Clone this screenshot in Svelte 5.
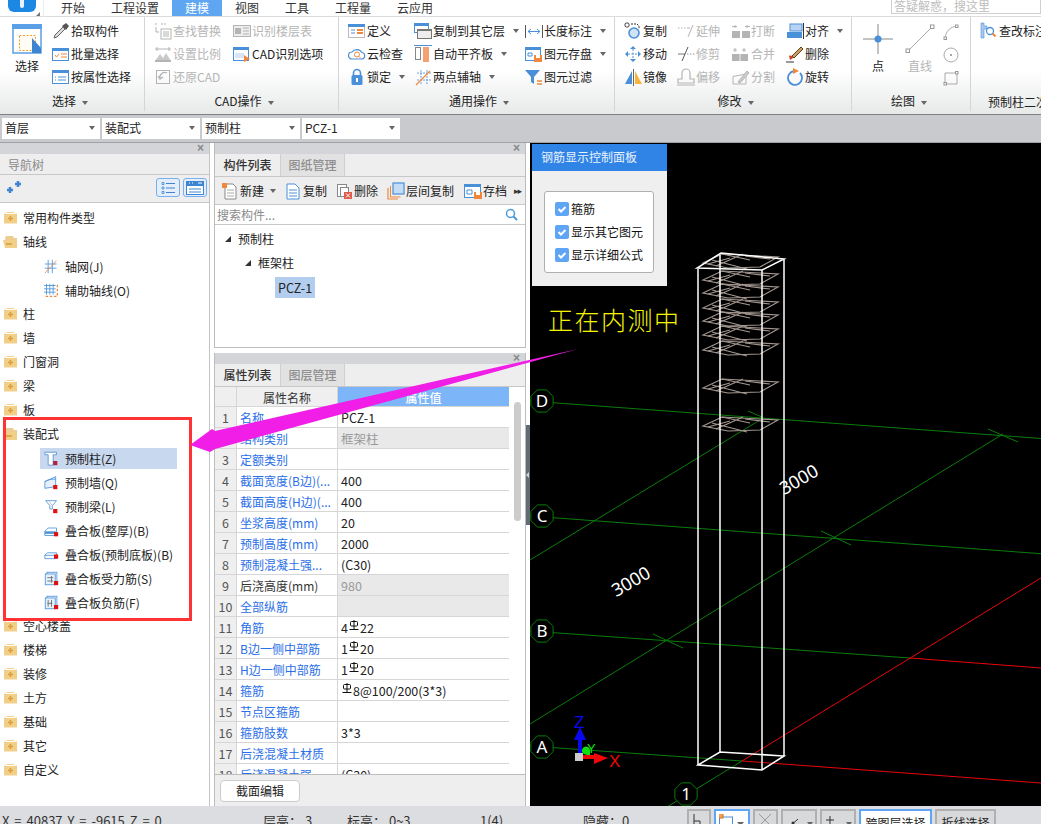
<script>
  const B = "#4a90d9";
  const O = "#f0873c";
  const G = "#b4b4b4";

  const icons = {
    pick: `<path d="M2 16l1-3 8-8 2 2-8 8z" fill="#ddd" stroke="#666"/><path d="M10 4l4-3 3 3-3 4z" fill="#555"/>`,
    batch: `<rect x=".5" y="3.5" width="16" height="12" fill="#fff" stroke="${B}"/><rect x="0" y="3" width="17" height="3" fill="${B}"/><path d="M3 10l1.5 2 2.5-3" fill="none" stroke="${O}"/><path d="M9 9h6M9 12h6" stroke="${O}"/>`,
    attr: `<rect x=".5" y="2.5" width="16" height="13" fill="#fff" stroke="${B}"/><rect x="0" y="2" width="17" height="3" fill="${B}"/><path d="M3 9h1M3 12h1M6 9h8M6 12h8" stroke="${B}"/>`,
    find: `<path d="M1 2h3M7 2h6" stroke="${G}" stroke-dasharray="2 1"/><rect x="7" y="7" width="10" height="10" fill="none" stroke="${G}"/><path d="M9 10h6M9 12h6M9 14h6" stroke="${G}"/><path d="M2 5v5h3" fill="none" stroke="${G}"/>`,
    floor: `<rect x=".5" y="3.5" width="17" height="11" fill="#eee" stroke="${G}"/><rect x="2" y="6" width="6" height="6" fill="${G}"/><path d="M10 6h6M10 9h6M10 12h6" stroke="${G}"/>`,
    scale: `<path d="M1 16l5-7 3 4 3-5 5 8z" fill="#c9c9c9"/><path d="M1 4h16M3 2v4M15 2v4" stroke="${G}"/><rect x="1" y="15" width="16" height="2" fill="${G}"/>`,
    undo: `<rect x="2.5" y="2.5" width="13" height="13" fill="none" stroke="${G}"/><path d="M13 5a5 5 0 0 0-7 6M4 8l2 3 3-2" fill="none" stroke="${G}" stroke-width="1.3"/>`,
    cadopt: `<rect x=".5" y="2.5" width="15" height="13" fill="#fff" stroke="${B}"/><rect x="0" y="2" width="16" height="3" fill="${B}"/><path d="M2 8h9v5H2z" fill="#d6e6f7"/><path d="M11 10l6 4-6 3z" fill="${O}"/>`,
    def: `<rect x=".5" y="2.5" width="16" height="13" fill="#fff" stroke="#bbb"/><rect x="0" y="2" width="17" height="3" fill="${B}"/><path d="M3 8h4M3 11h4" stroke="${B}"/><rect x="9" y="7" width="6" height="2" fill="${O}"/><rect x="9" y="10" width="6" height="2" fill="${O}"/>`,
    cloud: `<path d="M4 14a3.5 3.5 0 0 1 0-7 6 6 0 0 1 10 .5 3.3 3.3 0 0 1 0 6.5z" fill="#fff" stroke="${B}" stroke-width="1.2"/><circle cx="9" cy="9.5" r="2.5" fill="none" stroke="${O}"/><path d="M11 11.5l1.5 1.5" stroke="${O}"/>`,
    lock: `<rect x="3.5" y="7" width="11" height="10" rx="1.5" fill="${B}"/><path d="M5.5 7V5a3.5 3.5 0 0 1 7 0v2" fill="none" stroke="${B}" stroke-width="1.6"/><rect x="8" y="10" width="2" height="4" fill="#fff"/>`,
    copyfl: `<rect x=".5" y="1.5" width="14" height="9" fill="#fff" stroke="${B}"/><rect x="0" y="1" width="15" height="3" fill="${B}"/><rect x="3.5" y="7.5" width="14" height="9" fill="#eee" stroke="#777"/><rect x="3" y="7" width="15" height="2" fill="#777"/>`,
    align: `<path d="M0 .5h18" stroke="${B}"/><rect x="1.5" y="2.5" width="5" height="12" fill="#fff" stroke="#888"/><rect x="9" y="2" width="6" height="15" fill="#f4a070"/>`,
    twopt: `<path d="M3 5h14M3 12h14M7 2v15M13 2v15" stroke="${B}" stroke-width=".8" stroke-dasharray="2 1"/><path d="M2 17L16 3" stroke="${O}" stroke-width="1.2"/>`,
    dim: `<path d="M.5 3v13M17.5 3v13" stroke="#555"/><path d="M3 9.5h12M3 9.5l3-2.5M3 9.5l3 2.5M15 9.5l-3-2.5M15 9.5l-3 2.5" fill="none" stroke="${B}"/>`,
    store: `<rect x=".5" y="2.5" width="15" height="13" fill="#fff" stroke="${B}"/><rect x="0" y="2" width="16" height="3" fill="${B}"/><path d="M3 8h4v3H3z" fill="none" stroke="${B}"/><rect x="9" y="10" width="8" height="7" fill="${O}"/><rect x="11" y="10" width="4" height="3" fill="#fff"/>`,
    filter: `<path d="M0 2h15L9 9v7l-3-2V9z" fill="${B}"/><path d="M12 13h5M12 16h5" stroke="${O}" stroke-width="1.4"/>`,
    copy: `<rect x="1" y="1" width="4" height="4" rx="1.5" fill="#fff" stroke="#333"/><path d="M7 2h6l2 2v3" fill="none" stroke="#333" stroke-dasharray="2 1"/><circle cx="10" cy="11" r="5" fill="#cfe3f7" stroke="${B}" stroke-width="1.6"/>`,
    extend: `<path d="M1 6h1.5M4 6h1.5M7 6h1.5" stroke="${G}"/><path d="M11 15l5-12" stroke="${G}"/><path d="M10 6h3" stroke="${G}"/>`,
    cut: `<path d="M1 9h7" stroke="#777"/><path d="M10 9h1.5M13 9h1.5M16 9h1.5" stroke="#999"/><path d="M5 16L11 2" stroke="#555"/>`,
    brk: `<rect x="0" y="9" width="8" height="7" fill="${G}"/><rect x="10" y="9" width="8" height="7" fill="${G}"/><path d="M3 3v3M0 4.500h5M15 3v3M13 4.500h5" stroke="${G}"/>`,
    merge: `<rect x="0" y="9" width="16" height="7" fill="${G}"/><path d="M8 9v7" stroke="#eee"/><path d="M3 3v4M1 5h4M12 3v4M10 5h4" stroke="${G}"/>`,
    offset: `<path d="M1 15v-4h4V5a3 3 0 0 1 8 0v6h4v4z" fill="none" stroke="${G}" stroke-width="1.2"/><path d="M0 17h18" stroke="${G}"/>`,
    split: `<path d="M1 8.500L14 6v10H1z" fill="none" stroke="${G}"/><path d="M6 14L15 3l2 2-9 10z" fill="#ccc" stroke="${G}"/>`,
    mirror: `<path d="M8 3L1 16h7z" fill="${B}"/><path d="M11 3l7 13h-7z" fill="#f5b43c"/><path d="M9.500 1v17" stroke="#666"/>`,
    move: `<path d="M9 1l3 3H6zM9 17l3-3H6zM1 9l3-3v6zM17 9l-3-3v6z" fill="${B}"/><path d="M9 4v10M4 9h10" stroke="${B}" stroke-dasharray="2 1.500"/>`,
    alignr: `<rect x="4" y="2" width="12" height="7" fill="#b9d4f2" stroke="${B}"/><rect x="1" y="10" width="15" height="6" fill="${B}"/><path d="M17.500 1v16" stroke="#333"/>`,
    del: `<path d="M6 11L15 2l2 2-9 9z" fill="#c8a060" stroke="#66401e"/><path d="M3 11c2-1 4 0 4 2l-3 2z" fill="#cc4422"/><path d="M0 17h8" stroke="#333"/>`,
    rotate: `<path d="M8 3a7 7 0 1 0 6 2" fill="none" stroke="${B}" stroke-width="1.8"/><path d="M7 0l6 3-6 3z" fill="${O}"/>`,
    query: `<path d="M1 1h3v3h3v3H4v9H1z" fill="#a8c8ee" stroke="${B}" stroke-width=".6"/><circle cx="10" cy="9" r="3.500" fill="#fff" stroke="${B}" stroke-width="1.3"/><path d="M12.500 11.500l3 3" stroke="${O}" stroke-width="2"/>`,
    fnew: `<path d="M4 2h8l3 3v12H4z" fill="#fff" stroke="#888"/><path d="M6 8h7M6 11h7M6 14h7" stroke="#aaa"/><rect x="1" y="1" width="5" height="5" fill="${O}" stroke-dasharray="1 1"/>`,
    fcopy: `<path d="M3 2h8l4 4v11H3z" fill="#fff" stroke="${B}"/><path d="M5 8h8M5 11h8M5 14h8" stroke="${B}"/>`,
    fdel: `<rect x="2.500" y="2.500" width="9" height="12" fill="#fff" stroke="#888"/><rect x="5.500" y="5.500" width="8" height="9" fill="#fff" stroke="#888"/><rect x="9" y="10" width="8" height="7" fill="#e05a4a"/><path d="M11 11.500l4 4M15 11.500l-4 4" stroke="#fff"/>`,
    fcross: `<path d="M1 6v11h10" fill="none" stroke="${O}" stroke-width="1.200"/><path d="M3.500 4v11h10" fill="none" stroke="${O}"/><rect x="6" y="1" width="11" height="11" fill="#c5dcf5" stroke="${B}" stroke-width="1.200"/>`,
    fsave: `<rect x=".5" y="2.500" width="16" height="13" fill="#fff" stroke="${B}"/><rect x="0" y="2" width="17" height="3" fill="${B}"/><path d="M3 8h5v4H3z" fill="none" stroke="${B}"/><rect x="10" y="10" width="8" height="7" fill="${O}"/><rect x="12" y="10" width="4" height="3" fill="#fff"/>`,
    net: `<path d="M5 1v16M10 1v16M1 6h14M1 11h14" stroke="${B}"/><path d="M1 17L15 2" stroke="${O}"/>`,
    aux: `<path d="M3 1v13M7 1v13M11 1v13M0 3h14M0 7h14M0 11h14" stroke="${B}"/><path d="M16 2v3M16 7v3M16 12v3M2 16h3M7 16h3M12 16h3" stroke="${O}" stroke-width="1.500"/>`,
    pcol: `<path d="M1 1.500h14v3h-4V17H5V4.500H1z" fill="#fff" stroke="${B}"/><rect x="11" y="12" width="5" height="5" fill="#b02040"/>`,
    pwall: `<path d="M1 8l13-6v12L1 16z" fill="#e6f0fb" stroke="${B}"/><path d="M1 8c4-3 9-3 13-3" fill="none" stroke="${B}"/><rect x="11" y="12" width="5" height="5" fill="#e01010"/>`,
    pbeam: `<path d="M2 2h13l-5 6v4H7V8z" fill="#fff" stroke="${B}"/><path d="M6 3l4 5" stroke="${G}"/><rect x="11" y="12" width="5" height="5" fill="#e01010"/>`,
    slab: `<path d="M1 10l4-4h10v9H1z" fill="#fff" stroke="${B}"/><rect x="1" y="10" width="14" height="3" fill="${B}"/><rect x="12" y="11" width="5" height="5" fill="#e01010"/>`,
    slab2: `<path d="M1 10l3-3h11v7H1z" fill="#fff" stroke="${B}"/><path d="M1 10h14" stroke="${B}"/><rect x="12" y="9" width="5" height="5" fill="#e01010"/>`,
    slabs: `<rect x="3.500" y="1.500" width="12" height="13" fill="#fff" stroke="${B}"/><rect x="1.500" y="3.500" width="12" height="13" fill="#e6f0fb" stroke="${B}"/><path d="M4 8h7M4 12h7M9 6v8" stroke="#666"/><rect x="12" y="12" width="5" height="5" fill="#e01010"/>`,
    slabf: `<rect x="3.500" y="1.500" width="12" height="13" fill="#fff" stroke="${B}"/><rect x="1.500" y="3.500" width="12" height="13" fill="#e6f0fb" stroke="${B}"/><path d="M5 6v8M9 6v8M4 10h6" stroke="#666"/><rect x="12" y="12" width="5" height="5" fill="#e01010"/>`,
  };

  const groups = [
    {
      label: "CAD操作", width: 194, pad: 9,
      cols: [
        { w: 79, items: [{ icon: "find", text: "查找替换", off: 1 }, { icon: "scale", text: "设置比例", off: 1 }, { icon: "undo", text: "还原CAD", off: 1 }] },
        { w: 100, items: [{ icon: "floor", text: "识别楼层表", off: 1 }, { icon: "cadopt", text: "CAD识别选项" }] },
      ],
    },
    {
      label: "通用操作", width: 276, pad: 9,
      cols: [
        { w: 66, items: [{ icon: "def", text: "定义" }, { icon: "cloud", text: "云检查" }, { icon: "lock", text: "锁定", arrow: 1 }] },
        { w: 111, items: [{ icon: "copyfl", text: "复制到其它层", arrow: 1 }, { icon: "align", text: "自动平齐板", arrow: 1 }, { icon: "twopt", text: "两点辅轴", arrow: 1 }] },
        { w: 85, items: [{ icon: "dim", text: "长度标注", arrow: 1 }, { icon: "store", text: "图元存盘", arrow: 1 }, { icon: "filter", text: "图元过滤" }] },
      ],
    },
    {
      label: "修改", width: 237, pad: 9,
      cols: [
        { w: 53, items: [{ icon: "copy", text: "复制" }, { icon: "move", text: "移动" }, { icon: "mirror", text: "镜像" }] },
        { w: 55, items: [{ icon: "extend", text: "延伸", off: 1 }, { icon: "cut", text: "修剪", off: 1 }, { icon: "offset", text: "偏移", off: 1 }] },
        { w: 54, items: [{ icon: "brk", text: "打断", off: 1 }, { icon: "merge", text: "合并", off: 1 }, { icon: "split", text: "分割", off: 1 }] },
        { w: 60, items: [{ icon: "alignr", text: "对齐", arrow: 1 }, { icon: "del", text: "删除" }, { icon: "rotate", text: "旋转" }] },
      ],
    },
  ];

  const tree = [
    { text: "常用构件类型", icon: "plus" }, { text: "轴线", icon: "minus" },
    { text: "轴网(J)", child: "net" }, { text: "辅助轴线(O)", child: "aux" },
    { text: "柱", icon: "plus" }, { text: "墙", icon: "plus" }, { text: "门窗洞", icon: "plus" },
    { text: "梁", icon: "plus" }, { text: "板", icon: "plus" }, { text: "装配式", icon: "minus" },
    { text: "预制柱(Z)", child: "pcol", sel: 1 }, { text: "预制墙(Q)", child: "pwall" }, { text: "预制梁(L)", child: "pbeam" },
    { text: "叠合板(整厚)(B)", child: "slab" }, { text: "叠合板(预制底板)(B)", child: "slab2" },
    { text: "叠合板受力筋(S)", child: "slabs" }, { text: "叠合板负筋(F)", child: "slabf" },
    { text: "空心楼盖", icon: "plus" }, { text: "楼梯", icon: "plus" }, { text: "装修", icon: "plus" },
    { text: "土方", icon: "plus" }, { text: "基础", icon: "plus" }, { text: "其它", icon: "plus" }, { text: "自定义", icon: "plus" },
  ];

  const listTools = [
    { icon: "fnew", text: "新建", arrow: 1, w: 63 }, { icon: "fcopy", text: "复制", w: 51 }, { icon: "fdel", text: "删除", w: 52 },
    { icon: "fcross", text: "层间复制", w: 77 }, { icon: "fsave", text: "存档", w: 50 },
  ];

  // # marks the rebar grade symbol
  const props = [
    ["名称", "PCZ-1"], ["结构类别", "框架柱", "gray"], ["定额类别", ""],
    ["截面宽度(B边)(...", "400"], ["截面高度(H边)(...", "400"], ["坐浆高度(mm)", "20"],
    ["预制高度(mm)", "2000"], ["预制混凝土强...", "(C30)"], ["后浇高度(mm)", "980", "gray", "plain"],
    ["全部纵筋", "", "gray"], ["角筋", "4#22"], ["B边一侧中部筋", "1#20"], ["H边一侧中部筋", "1#20"],
    ["箍筋", " #8@100/200(3*3)"], ["节点区箍筋", ""], ["箍筋肢数", "3*3"], ["后浇混凝土材质", ""], ["后浇混凝土强", "(C30)"],
  ];

  const checks = ["箍筋", "显示其它图元", "显示详细公式"];
  const stirrups = [260, 277, 290, 305, 318, 332, 347, 385, 423];
  const axes = [
    { t: "D", x: 542, y: 400 }, { t: "C", x: 542, y: 515 }, { t: "B", x: 542, y: 630 },
    { t: "A", x: 542, y: 746 }, { t: "1", x: 686, y: 793 },
  ];
  const ticks = [[988, 428, 1018, 441], [821, 530, 851, 544], [653, 633, 683, 647], [748, 410, 762, 416]];
  const tools = ["首层", "装配式", "预制柱", "PCZ-1"];

  function octagon(x, y) {
    const r = 12;
    let pts = [];
    for (let i = 0; i < 8; i++) {
      const a = Math.PI / 8 + (i * Math.PI) / 4;
      pts.push(`${(x + r * Math.cos(a)).toFixed(1)},${(y + r * Math.sin(a)).toFixed(1)}`);
    }
    return pts.join(" ");
  }
</script>

{#snippet icon(name, size = 18)}
  <svg class="ico" width={size} height={size} viewBox="0 0 18 18">{@html icons[name]}</svg>
{/snippet}

{#snippet close()}
  <div class="titlebar"><span class="x">×</span></div>
{/snippet}

<div class="app">
  <header class="tabs">
    <div class="logo">
      <div class="logo-mark"><i></i></div>
      <span class="logo-arrow"></span>
    </div>
    <nav class="tab-list">
      <span>开始</span><span>工程设置</span><span class="on">建模</span><span>视图</span><span>工具</span><span>工程量</span><span>云应用</span>
    </nav>
    <div class="ask">答疑解惑，搜这里</div>
  </header>

  <section class="ribbon">
    <div class="group" style="width:145px">
      <div class="group-body">
        <div class="big big-select">
          <svg width="30" height="30" viewBox="0 0 30 30">
            <rect x="1" y="1" width="28" height="28" fill="#fff" stroke="#5b9fe6" stroke-width="1.500" />
            <rect x="0" y="0" width="30" height="5" fill="#5b9fe6" />
            <rect x="7.500" y="11.500" width="16" height="15" fill="#fffdf4" stroke="#f0a030" stroke-dasharray="2 1.500" />
            <path d="M20 14l9 10v5h-9z" fill="#3d85d0" />
          </svg>
          <span>选择</span>
        </div>
        <div class="col">
          <div class="item">{@render icon("pick")}<span>拾取构件</span></div>
          <div class="item">{@render icon("batch")}<span>批量选择</span></div>
          <div class="item">{@render icon("attr")}<span>按属性选择</span></div>
        </div>
      </div>
      <div class="group-label">选择<i class="caret"></i></div>
    </div>

    {#each groups as g}
      <div class="group" style="width:{g.width}px;padding-left:{g.pad}px">
        <div class="group-body">
          {#each g.cols as c}
            <div class="col" style="width:{c.w}px">
              {#each c.items as it}
                <div class="item" class:off={it.off}>
                  {@render icon(it.icon)}<span>{it.text}</span>{#if it.arrow}<i class="caret"></i>{/if}
                </div>
              {/each}
            </div>
          {/each}
        </div>
        <div class="group-label">{g.label}<i class="caret"></i></div>
      </div>
    {/each}

    <div class="group" style="width:119px">
      <div class="group-body">
        <div class="big" style="width:52px">
          <svg width="30" height="30" viewBox="0 0 30 30">
            <path d="M0 15h30M15 0v30" stroke="#888" />
            <circle cx="15" cy="15" r="3.500" fill="#4a90d9" />
          </svg>
          <span>点</span>
        </div>
        <div class="big off" style="width:32px">
          <svg width="30" height="30" viewBox="0 0 30 30">
            <path d="M3 27L27 3" stroke="#aaa" />
            <rect x="1" y="25" width="3.500" height="3.500" fill="#fff" stroke="#999" />
            <rect x="25.500" y="1" width="3.500" height="3.500" fill="#fff" stroke="#999" />
          </svg>
          <span>直线</span>
        </div>
        <div class="col mini">
          <svg width="16" height="16" viewBox="0 0 16 16"><path d="M2 14C3 7 7 3 14 2" fill="none" stroke="#aaa" /><rect x="1" y="13" width="2.500" height="2.500" fill="#fff" stroke="#999" /><rect x="12.500" y="1" width="2.500" height="2.500" fill="#fff" stroke="#999" /></svg>
          <svg width="16" height="16" viewBox="0 0 16 16"><circle cx="8" cy="8" r="7" fill="none" stroke="#aaa" /><circle cx="8" cy="8" r="1" fill="#888" /></svg>
          <svg width="16" height="16" viewBox="0 0 16 16"><path d="M2 3h12v11H2z" fill="none" stroke="#aaa" /><rect x="12.500" y="1.500" width="2.500" height="2.500" fill="#fff" stroke="#999" /><rect x="1" y="12.500" width="2.500" height="2.500" fill="#fff" stroke="#999" /></svg>
        </div>
      </div>
      <div class="group-label">绘图<i class="caret"></i></div>
    </div>

    <div class="group last">
      <div class="group-body">
        <div class="col">
          <div class="item">{@render icon("query")}<span>查改标注</span></div>
        </div>
      </div>
      <div class="group-label">预制柱二次编辑</div>
    </div>
  </section>

  <section class="selects">
    {#each tools as t}
      <div class="select"><span>{t}</span><i class="caret"></i></div>
    {/each}
  </section>

  <main class="main">
    <aside class="nav">
      {@render close()}
      <div class="nav-title">导航树</div>
      <div class="nav-tools">
        <svg width="14" height="14" viewBox="0 0 14 14" class="spark">
          <path d="M8 4h6M11 1v6M0 10h6M3 7v6" stroke="#3d85d0" stroke-width="2.500" />
        </svg>
        <span class="nav-gap"></span>
        <button class="view-btn" aria-label="列表">
          <svg width="14" height="14" viewBox="0 0 14 14"><path d="M1 1.500h2v2H1zM1 6h2v2H1zM1 10.500h2v2H1z" fill="none" stroke="#3d85d0" stroke-width=".8" /><path d="M5 2.500h9M5 7h9M5 11.500h9" stroke="#3d85d0" /></svg>
        </button>
        <button class="view-btn" aria-label="面板">
          <svg width="18" height="14" viewBox="0 0 18 14"><rect x=".5" y=".5" width="17" height="13" fill="#fff" stroke="#3d85d0" /><rect x="0" y="0" width="18" height="5" fill="#3d85d0" /><path d="M3 8h12M3 11h12" stroke="#3d85d0" /><path d="M3 2h1M6 2h1M12 2h4" stroke="#fff" /></svg>
        </button>
      </div>
      <ul class="tree">
        {#each tree as n}
          {#if n.child}
            <li class="leaf" class:sel={n.sel}>{@render icon(n.child, 15)}<span>{n.text}</span></li>
          {:else}
            <li class="branch">
              <svg class="folder" width="15" height="14" viewBox="0 0 15 14">
                {#if n.icon === "plus"}
                  <path d="M3 2.500l1-1.500h7l.5 1.500h2.500v10H1v-10z" fill="#f1cf89" />
                  <path d="M3 2.500h9" stroke="#fff" />
                  <path d="M7.500 5v5M5 7.500h5" stroke="#d8a03c" stroke-width="1.600" />
                {:else}
                  <path d="M2 3l1-2h7l1 2h3v10H4z" fill="#eccd92" />
                  <path d="M0 5h13l1 8H2z" fill="#f1cf89" />
                  <path d="M3 9h6" stroke="#d8a03c" stroke-width="1.600" />
                {/if}
              </svg>
              <span>{n.text}</span>
            </li>
          {/if}
        {/each}
      </ul>
    </aside>

    <div class="gutter"></div>

    <div class="middle">
      <section class="panel list-panel">
        {@render close()}
        <div class="panel-tabs"><span class="active">构件列表</span><span>图纸管理</span></div>
        <div class="list-tools">
          {#each listTools as t}
            <div class="list-tool" style="width:{t.w}px">
              {@render icon(t.icon)}<span>{t.text}</span>{#if t.arrow}<i class="caret"></i>{/if}
            </div>
          {/each}
          <span class="more">▸▸</span>
        </div>
        <div class="search">
          <span>搜索构件...</span>
          <svg width="13" height="13" viewBox="0 0 13 13"><circle cx="5.500" cy="5.500" r="4" fill="none" stroke="#4a9bd8" stroke-width="1.500" /><path d="M8.500 8.500l3.500 3.500" stroke="#4a9bd8" stroke-width="2" /></svg>
        </div>
        <div class="list-tree">
          <div class="t1"><i class="tri"></i>预制柱</div>
          <div class="t2"><i class="tri"></i>框架柱</div>
          <div class="t3"><span>PCZ-1</span></div>
        </div>
      </section>

      <section class="panel prop-panel">
        {@render close()}
        <div class="panel-tabs"><span class="active">属性列表</span><span>图层管理</span></div>
        <div class="table-wrap">
          <div class="table">
            <div class="row head">
              <div class="num"></div><div class="name">属性名称</div><div class="val">属性值</div>
            </div>
            {#each props as p, i}
              <div class="row">
                <div class="num">{i + 1}</div>
                <div class="name" class:plain={p[3]}>{p[0]}</div>
                <div class="val" class:gray={p[2]}>
                  {#each p[1].split("#") as part, k}
                    {#if k > 0}
                      <svg class="rebar" width="10" height="11" viewBox="0 0 10 11"><rect x="1.500" y="1.500" width="7" height="4.500" rx="1" fill="none" stroke="#111" /><path d="M5 0v9.500M.5 9.500h9" stroke="#111" /></svg>
                    {/if}{part}
                  {/each}
                </div>
              </div>
            {/each}
          </div>
          <div class="scroll"><div class="thumb"></div></div>
        </div>
        <div class="prop-foot"><button class="edit-btn">截面编辑</button></div>
      </section>
    </div>

    <div class="splitter"><div class="grip"><i></i></div></div>

    <section class="view">
      <svg class="scene" viewBox="530 142 511 664" width="511" height="664">
        <g stroke="#0a7c0a" fill="none">
          <path d="M530 400L1041 437.500M530 515L1041 552.700M530 630L910 657" />
          <path d="M530 559L760 419M530 723L1003 433M667 806L742 760M530 745L742 760" />
          {#each ticks as t}
            <path d="M{t[0]} {t[1]}L{t[2]} {t[3]}" />
          {/each}
        </g>
        <path d="M910 657L1041 667M742 760L1041 782M742 760L1041 577" stroke="#e8060c" fill="none" />

        {#each stirrups as y}
          <g transform="translate(0 {y})" fill="none" stroke="#a2968f" stroke-width="1.200">
            <path d="M703 2L722 -7L778 -4L760 6L728 7Z" />
            <path d="M712 -1L747 8M743 -7L716 5M745 -5L770 -2M708 3L730 -3M722 -7L750 -1" />
          </g>
        {/each}

        <g fill="none" stroke="#fff" stroke-width="1.500">
          <path d="M697 267L762 269L784 258L721 252ZM698 267V764M762 269V769M784 258V755M720 252V751" />
          <path d="M698 764L762 769L784 755L720 751Z" />
        </g>

        {#each axes as a}
          <polygon points={octagon(a.x, a.y)} fill="#000" stroke="#0a7c0a" />
          <text x={a.x} y={a.y + 6} class="axis">{a.t}</text>
        {/each}

        <text class="dim-text" transform="translate(634 586) rotate(-30)">3000</text>
        <text class="dim-text" transform="translate(802 484) rotate(-30)">3000</text>
        <text class="beta" x="548" y="329">正在内测中</text>

        <path d="M580 756V738" stroke="#0808f0" stroke-width="4" />
        <path d="M580 726l6 13h-12z" fill="#0808f0" />
        <text class="gizmo" x="574" y="727" fill="#0808f0">Z</text>
        <path d="M590 750a4 4 0 1 0-6 3l6 2z" fill="#10e010" />
        <text class="gizmo small" x="587" y="752" fill="#10e010">Y</text>
        <path d="M582 756H596" stroke="#f00808" stroke-width="4" />
        <path d="M608 757l-14 6v-11z" fill="#f00808" />
        <text class="gizmo" x="609" y="766" fill="#f00808">X</text>
        <rect x="575" y="752" width="8" height="8" fill="#ccc" />
      </svg>

      <div class="rebar-panel">
        <div class="rebar-title">钢筋显示控制面板</div>
        <div class="rebar-body">
          <div class="rebar-box">
            {#each checks as c}
              <label>
                <svg width="14" height="14" viewBox="0 0 14 14"><rect width="14" height="14" rx="2" fill="#5ea5f5" /><path d="M3.500 7l2.500 2.500 4.500-4.500" fill="none" stroke="#fff" stroke-width="2" /></svg>
                <span>{c}</span>
              </label>
            {/each}
          </div>
        </div>
      </div>
    </section>
  </main>

  <footer class="status">
    <span class="s-xyz">X = 40837 Y = -9615 Z = 0</span>
    <span class="s-fl">层高： 3</span>
    <span class="s-el">标高： 0~3</span>
    <span class="s-pg">1(4)</span>
    <span class="s-hd">隐藏：0</span>
    <div class="s-btns">
      <button style="width:24px"><svg width="12" height="14" viewBox="0 0 12 14"><path d="M2 0v12M2 7h6v5" fill="none" stroke="#333" /></svg></button>
      <button class="sel" style="width:36px">
        <svg width="26" height="14" viewBox="0 0 26 14"><rect x=".5" y="3" width="13" height="14" fill="none" stroke="#4a90d9" /><rect x="-1" y="-1" width="5" height="5" fill="#f4a050" stroke="#d07020" /><path d="M18 8h7l-3.500 4z" fill="#666" /></svg>
      </button>
      <button style="width:25px"><svg width="14" height="12" viewBox="0 0 14 12"><path d="M1 0l12 12M13 0L1 12" stroke="#999" /></svg></button>
      <button style="width:36px"><svg width="28" height="14" viewBox="0 0 28 14"><path d="M3 13l9-8" stroke="#333" /><circle cx="7" cy="9" r="1.500" fill="#333" /><path d="M21 8h6l-3 4z" fill="#666" /></svg></button>
      <button style="width:36px"><svg width="28" height="14" viewBox="0 0 28 14"><path d="M1 6h8M5 2v8M8 12h8" stroke="#333" /><path d="M21 8h6l-3 4z" fill="#666" /></svg></button>
      <button class="sel txt" style="width:73px">跨图层选择</button>
      <button class="txt" style="width:61px">折线选择</button>
    </div>
  </footer>

  <svg class="callout" width="1041" height="824" viewBox="0 0 1041 824">
    <rect x="4.500" y="418.500" width="186" height="201" fill="none" stroke="#f33" stroke-width="3" />
    <path d="M578 349L215 431L212 429L190 445L210 452L215 449Z" fill="#f01ee6" />
  </svg>
</div>

<style>
  :global(body) {
    margin: 0;
    background: #fff;
  }

  .app {
    position: relative;
    width: 1041px;
    height: 824px;
    overflow: hidden;
    display: flex;
    flex-direction: column;
    font: 12px/16px "Noto Sans CJK SC", "Noto Sans", sans-serif;
    color: #222;
  }

  .ico {
    flex: none;
    display: block;
  }

  .caret {
    display: inline-block;
    width: 0;
    height: 0;
    border: 3.5px solid transparent;
    border-top: 4px solid #666;
    border-bottom: 0;
    vertical-align: middle;
  }

  /* top tabs */
  .tabs {
    height: 16px;
    flex: none;
    display: flex;
    background: #fff;
    border-bottom: 1px solid #dcdcdc;
  }

  .logo {
    width: 44px;
    height: 17px;
    flex: none;
    position: relative;
    border-right: 1px solid #ececec;
    box-sizing: border-box;
  }

  .logo-mark {
    width: 28px;
    height: 12px;
    margin-left: 8px;
    background: #1c88e4;
    border-radius: 0 0 6px 6px;
    display: flex;
    justify-content: center;
  }

  .logo-mark i {
    width: 4px;
    height: 8px;
    background: #e8f3fd;
    border-radius: 0 0 2px 2px;
  }

  .logo-arrow {
    position: absolute;
    left: 36px;
    top: 12px;
    border: 2px solid transparent;
    border-right-color: #777;
    border-bottom-color: #777;
  }

  .tab-list {
    display: flex;
    margin-left: 4px;
    flex: 1;
    line-height: 15px;
  }

  .tab-list span {
    padding: 0 13px;
    color: #333;
  }

  .tab-list .on {
    background: #5ea6f2;
    color: #fff;
  }

  .ask {
    width: 150px;
    height: 14px;
    box-sizing: border-box;
    border: 1px solid #d0d0d0;
    border-top: 0;
    padding-left: 2px;
    color: #bdbdbd;
    line-height: 12px;
    overflow: hidden;
  }

  /* ribbon */
  .ribbon {
    height: 97px;
    flex: none;
    display: flex;
    background: linear-gradient(#fff 55%, #e7e9e9);
    border-bottom: 1px solid #7f8285;
    overflow: hidden;
  }

  .group {
    flex: none;
    box-sizing: border-box;
    display: flex;
    flex-direction: column;
    border-right: 1px solid #d4d6d6;
    margin-bottom: 3px;
  }

  .group-body {
    height: 73px;
    padding-top: 2px;
    display: flex;
    box-sizing: border-box;
  }

  .group-label {
    text-align: center;
    line-height: 18px;
    margin-top: 2px;
    margin-left: -4px;
    white-space: nowrap;
  }

  .group-label .caret {
    margin-left: 6px;
  }

  .col {
    display: flex;
    flex-direction: column;
    flex: none;
  }

  .item {
    height: 23px;
    display: flex;
    align-items: center;
    gap: 1px;
    white-space: nowrap;
  }

  .item .caret {
    margin-left: 7px;
  }

  .off {
    color: #b5b5b5;
  }

  .big {
    display: flex;
    flex-direction: column;
    align-items: center;
    flex: none;
    padding-top: 5px;
  }

  .big span {
    margin-top: 4px;
  }

  .big-select {
    width: 30px;
    margin: 0 10px 0 12px;
  }

  .mini {
    padding-left: 7px;
    gap: 7px;
    padding-top: 5px;
  }

  .last {
    flex: 1;
    padding-left: 9px;
    border-right: 0;
  }

  .last .group-label {
    text-align: left;
    margin: 4px 0 0 8px;
  }

  /* selects */
  .selects {
    height: 27px;
    flex: none;
    box-sizing: border-box;
    padding: 3px 0 0 2px;
    display: flex;
    gap: 2px;
    background: #c8cacd;
  }

  .select {
    width: 98px;
    height: 21px;
    background: #fff;
    display: flex;
    align-items: center;
    justify-content: space-between;
    box-sizing: border-box;
    padding: 0 5px 2px 3px;
  }

  /* main */
  .main {
    flex: 1;
    min-height: 0;
    display: flex;
    background: #fff;
    border-top: 1px solid #a0a2a5;
  }

  .titlebar {
    height: 11px;
    flex: none;
    background: #d3d5d9;
    display: flex;
    justify-content: flex-end;
  }

  .x {
    font: bold 12px/10px "Liberation Sans", sans-serif;
    color: #888;
    padding-right: 5px;
  }

  .nav {
    width: 210px;
    flex: none;
    box-sizing: border-box;
    border-right: 1px solid #c4c4c4;
    display: flex;
    flex-direction: column;
  }

  .nav-title {
    height: 21px;
    flex: none;
    box-sizing: border-box;
    background: #eee;
    border-bottom: 1px solid #c8c8c8;
    color: #8a8a8a;
    padding-left: 8px;
    line-height: 22px;
  }

  .nav-tools {
    height: 28px;
    flex: none;
    box-sizing: border-box;
    background: #eee;
    border-bottom: 1px solid #c8c8c8;
    display: flex;
    align-items: center;
    padding: 0 2px 2px 7px;
  }

  .nav-gap {
    flex: 1;
  }

  .spark {
    margin-bottom: 2px;
  }

  .view-btn {
    width: 24px;
    height: 19px;
    padding: 0;
    margin-left: 3px;
    background: #e4eefa;
    border: 1px solid #76b0ee;
    border-radius: 3px;
    display: flex;
    align-items: center;
    justify-content: center;
  }

  .tree {
    margin: 0;
    padding: 3px 0 0;
    list-style: none;
    flex: 1;
    background: #fff;
  }

  .tree li {
    height: 24px;
    display: flex;
    align-items: center;
    box-sizing: border-box;
  }

  .branch {
    padding-left: 3px;
  }

  .branch span {
    margin-left: 5px;
  }

  .leaf {
    margin-left: 40px;
    width: 137px;
    padding-left: 4px;
    border-top: 2px solid transparent;
    border-bottom: 1px solid transparent;
    background-clip: padding-box;
  }

  .leaf span {
    margin-left: 6px;
  }

  .leaf.sel {
    background-color: #c8d8ee;
  }

  .gutter {
    width: 4px;
    flex: none;
  }

  .middle {
    width: 312px;
    flex: none;
    display: flex;
    flex-direction: column;
    gap: 5px;
  }

  .panel {
    box-sizing: border-box;
    border: 1px solid #bdbdbd;
    border-top: 0;
    display: flex;
    flex-direction: column;
    background: #eee;
  }

  .list-panel {
    height: 205px;
    flex: none;
  }

  .prop-panel {
    flex: 1;
    min-height: 0;
    border-bottom: 0;
  }

  .panel-tabs {
    height: 23px;
    flex: none;
    display: flex;
    background: #eee;
    border-bottom: 1px solid #c8c8c8;
    box-sizing: border-box;
  }

  .panel-tabs span {
    width: 65px;
    text-align: center;
    line-height: 22px;
    color: #8f8f8f;
    background: #e2e2e2;
    border: 1px solid #cfcfcf;
    border-width: 0 1px;
    box-sizing: border-box;
    font-weight: 500;
  }

  .panel-tabs .active {
    color: #333;
    background: #eee;
    border: 0;
  }

  .list-tools {
    height: 28px;
    flex: none;
    display: flex;
    align-items: center;
    padding-left: 6px;
    box-sizing: border-box;
    border-bottom: 1px solid #c8c8c8;
  }

  .list-tool {
    display: flex;
    align-items: center;
    gap: 1px;
    flex: none;
  }

  .list-tool .caret {
    margin-left: 5px;
  }

  .more {
    font: 9px/10px "DejaVu Sans", sans-serif;
    letter-spacing: -1px;
    color: #333;
    white-space: nowrap;
  }

  .search {
    height: 19px;
    flex: none;
    background: #fff;
    border-bottom: 1px solid #c8c8c8;
    display: flex;
    align-items: center;
    justify-content: space-between;
    color: #8a8a8a;
    padding: 0 7px 0 2px;
  }

  .list-tree {
    flex: 1;
    background: #fff;
    padding-top: 2px;
  }

  .list-tree > div {
    height: 24px;
    display: flex;
    align-items: center;
  }

  .tri {
    width: 0;
    height: 0;
    border-style: solid;
    border-width: 0 0 6px 6px;
    border-color: transparent transparent #333;
    margin-right: 7px;
  }

  .t1 {
    padding-left: 10px;
  }

  .t2 {
    padding-left: 30px;
  }

  .t3 {
    padding-left: 60px;
  }

  .t3 span {
    background: #b3cdee;
    height: 21px;
    line-height: 21px;
    padding: 0 3px;
    font-size: 12.5px;
  }

  .table-wrap {
    height: 388px;
    flex: none;
    display: flex;
    background: #fff;
    overflow: hidden;
    border-bottom: 1px solid #bdbdbd;
    box-sizing: border-box;
  }

  .table {
    width: 294px;
    flex: none;
  }

  .row {
    display: grid;
    grid-template-columns: 22px 101px 171px;
    height: 21px;
    box-sizing: border-box;
    border-bottom: 1px solid #d6d6d6;
    line-height: 22px;
    white-space: nowrap;
    overflow: hidden;
  }

  .num {
    background: #efefef;
    text-align: center;
    color: #555;
    font-size: 12.5px;
    border-right: 1px solid #d6d6d6;
  }

  .name {
    color: #2b6fe8;
    padding-left: 3px;
    border-right: 1px solid #d6d6d6;
  }

  .name.plain {
    color: #333;
  }

  .val {
    padding-left: 3px;
    font-size: 12.5px;
    color: #222;
  }

  .val.gray {
    background: #e9e9e9;
    color: #999;
  }

  .rebar {
    vertical-align: 2px;
    margin: 0 1px;
  }

  .row.head {
    height: 20px;
    background: #efefef;
    text-align: center;
  }

  .head .name {
    color: #333;
    padding: 0;
  }

  .head .val {
    background: #7cb6f8;
    color: #fff;
    font-size: 12px;
    font-weight: 500;
    padding: 0;
  }

  .scroll {
    flex: 1;
    padding: 15px 0 0 5px;
  }

  .thumb {
    width: 7px;
    height: 119px;
    background: #ccc;
    border-radius: 4px;
  }

  .prop-foot {
    flex: 1;
    padding: 5px 0 0 5px;
  }

  .edit-btn {
    width: 80px;
    height: 22px;
    background: #fff;
    border: 1px solid #ccc;
    border-radius: 4px;
    padding: 0;
    font: inherit;
    color: #222;
  }

  .splitter {
    width: 4px;
    flex: none;
    padding-top: 282px;
  }

  .grip {
    width: 4px;
    height: 100px;
    background: #626c76;
    display: flex;
    align-items: center;
  }

  .grip i {
    border: 3px solid transparent;
    border-left: 0;
    border-right: 3px solid #cfd4d9;
  }

  /* 3d view */
  .view {
    position: relative;
    width: 511px;
    flex: none;
    background: #000;
    overflow: hidden;
  }

  .scene {
    position: absolute;
    left: 0;
    top: 0;
  }

  .axis {
    font: 17px "Noto Sans", sans-serif;
    fill: #fff;
    text-anchor: middle;
  }

  .dim-text {
    font: 18px "Noto Sans", sans-serif;
    fill: #fff;
    text-anchor: middle;
  }

  .beta {
    font: 300 25px "Noto Sans CJK SC", sans-serif;
    letter-spacing: 1.500px;
    fill: #f5f500;
  }

  .gizmo {
    font: 400 17px "Liberation Sans", sans-serif;
  }

  .gizmo.small {
    font-size: 13px;
  }

  .rebar-panel {
    position: absolute;
    left: 2px;
    top: 1px;
    width: 135px;
    height: 142px;
    background: #efefef;
    display: flex;
    flex-direction: column;
  }

  .rebar-title {
    height: 27px;
    background: #3084e6;
    color: #eaf2fc;
    line-height: 26px;
    padding-left: 9px;
    flex: none;
  }

  .rebar-body {
    padding: 20px 13px 0 12px;
  }

  .rebar-box {
    height: 82px;
    box-sizing: border-box;
    background: #fff;
    border: 1px solid #b0b0b0;
    border-radius: 3px;
    padding: 5px 0 0 10px;
  }

  .rebar-box label {
    height: 23px;
    display: flex;
    align-items: center;
    gap: 2px;
    color: #111;
    white-space: nowrap;
  }

  /* status bar */
  .status {
    height: 18px;
    flex: none;
    background: #dcdde0;
    display: flex;
    overflow: hidden;
    color: #333;
    line-height: 30px;
    white-space: nowrap;
    font-size: 13px;
  }

  .status > span {
    flex: none;
  }

  .s-xyz {
    width: 263px;
    padding-left: 2px;
    box-sizing: border-box;
    word-spacing: 2px;
  }

  .s-fl {
    width: 84px;
  }

  .s-el {
    width: 133px;
  }

  .s-pg {
    width: 103px;
  }

  .s-hd {
    width: 104px;
  }

  .s-btns {
    display: flex;
    gap: 3px;
    padding-top: 3px;
    align-items: flex-start;
  }

  .s-btns button {
    height: 24px;
    padding: 3px 0 0 3px;
    box-sizing: border-box;
    border: 2px solid #b0b0b0;
    background: #d8d9db;
    font: 12px/16px "Noto Sans CJK SC", sans-serif;
    color: #222;
    display: flex;
    justify-content: flex-start;
    flex: none;
  }

  .s-btns .sel {
    background: #fff;
    border-color: #5ea5f5;
  }

  .s-btns .txt {
    justify-content: center;
    padding: 4px 0 0;
  }

  .callout {
    position: absolute;
    left: 0;
    top: 0;
    pointer-events: none;
  }
</style>
